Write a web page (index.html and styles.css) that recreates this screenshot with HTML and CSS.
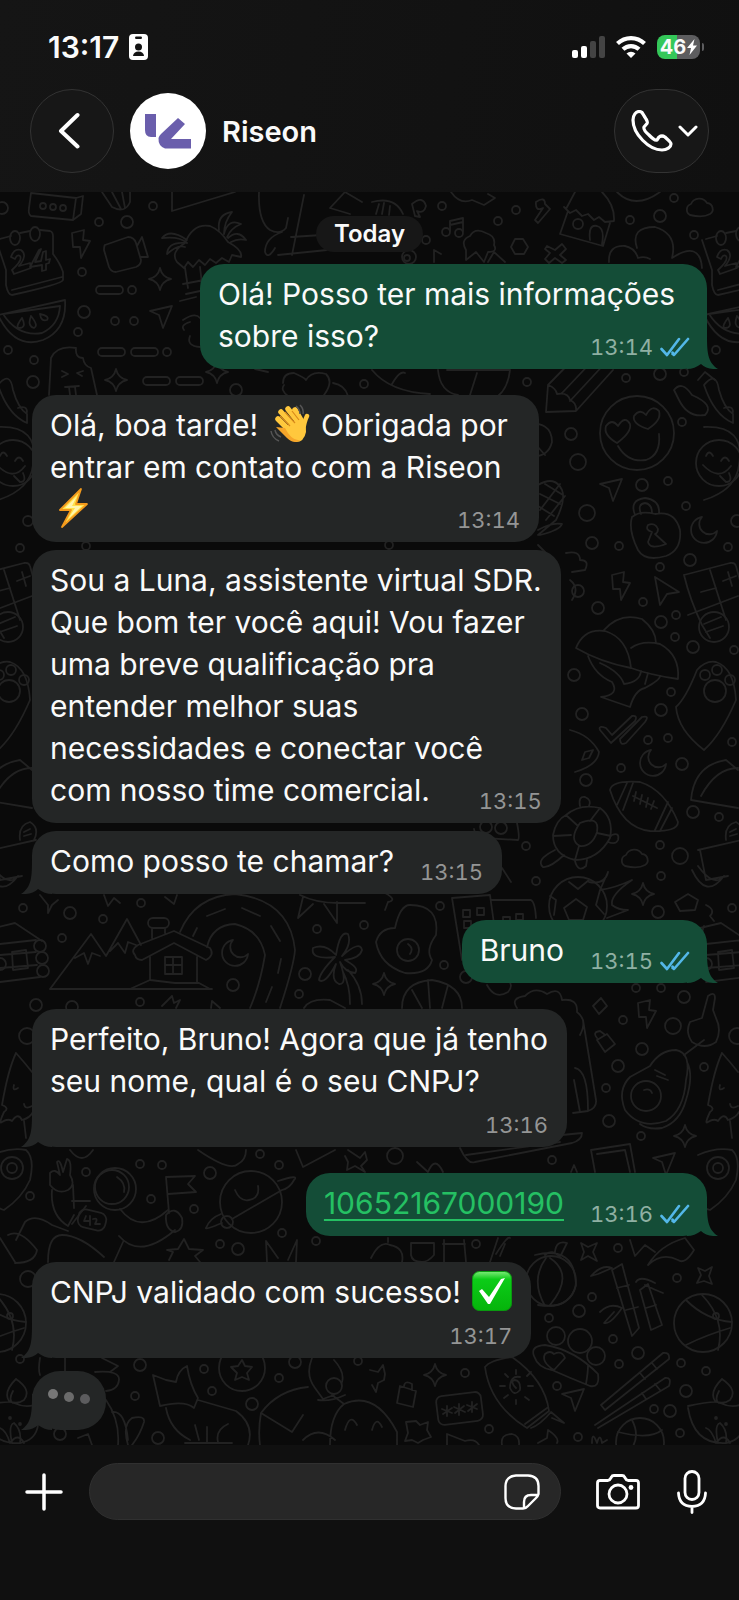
FILE: index.html
```html
<!DOCTYPE html>
<html lang="pt-BR">
<head>
<meta charset="utf-8">
<meta name="viewport" content="width=device-width, initial-scale=1">
<title>Riseon</title>
<link rel="stylesheet" href="styles.css">
</head>
<body>
<svg class="defs" aria-hidden="true">
  <defs>
    <symbol id="tail" viewBox="0 0 31 36"><path d="M20 0C20 18 20 29 31 36C24 36.500 18 35 14 31C10 34 5 36 0 36V0Z"/></symbol>
    <symbol id="read" viewBox="0 0 30 20"><path d="M1.500 12L7 18L19 2M12.500 17L14 18L28 2M12.500 15.500L14 18" fill="none" stroke="#53b7e8" stroke-width="2.600" stroke-linecap="round" stroke-linejoin="round"/></symbol>
    <path id="spark" d="M0-11Q2-2 11 0Q2 2 0 11Q-2 2-11 0Q-2-2 0-11Z"/>
    <path id="plane" d="M-11-6L11-11L2 11L-2-2Z"/>
    <path id="bolt" d="M-9-11L3-14L2-4L9-3L0 14L-1 3L-8 3Z"/>
    <path id="moon" d="M-1-13A13 13 0 1 0 14 1A10 10 0 0 1-1-13Z"/>
    <path id="cloud" d="M-10 7A6 6 0 0 1-9-4A9 9 0 0 1 7-5A6 6 0 0 1 10 6Q3 10-10 7Z"/>
    <g id="calendar"><path d="M0 239L11 236M20 233L30 231M40 230L50 231Q53 232 53 236V254Q60 263 63 272V280Q62 284 12 295Q8 295 6 285V270L-4 240M12 290L62 277"/><ellipse cx="15" cy="238" rx="5" ry="7"/><ellipse cx="35" cy="234" rx="5" ry="7"/><path d="M11 257Q14 248 21 250Q28 255 19 266L30 263L31 268L14 274L12 270Q23 260 20 256Q17 254 15 259ZM39 250L41 249L35 262L41 261L43 252L46 251L46 260L50 259L49 263L46 264L46 270L42 271V265L30 267Z"/></g>
  </defs>
</svg>

<header class="top">
  <div class="status">
    <div class="clock"><span>13:17</span>
      <svg width="19" height="26" viewBox="0 0 19 26" aria-hidden="true"><rect width="19" height="26" rx="4" fill="#fff"/><rect x="6" y="2.500" width="7" height="2.500" rx="1.200" fill="#131313"/><circle cx="9.500" cy="13" r="3.500" fill="#131313"/><path d="M4 22Q4.500 17.500 9.500 17.500T15 22Z" fill="#131313"/></svg>
    </div>
    <div class="signals">
      <svg width="33" height="24" viewBox="0 0 33 24" aria-hidden="true"><rect x="0" y="15" width="6" height="8" rx="2" fill="#fff"/><rect x="9" y="11" width="6" height="12" rx="2" fill="#fff"/><rect x="18" y="6" width="6" height="17" rx="2" fill="#444"/><rect x="27" y="1" width="6" height="22" rx="2" fill="#444"/></svg>
      <svg width="30" height="24" viewBox="0 0 30 24" aria-hidden="true"><g fill="none" stroke="#fff" stroke-width="4.200"><path d="M1.500 8.500A19.500 19.500 0 0 1 28.500 8.500"/><path d="M7 14.300A11.500 11.500 0 0 1 23 14.300"/></g><path d="M10.500 18.500A6.500 6.500 0 0 1 19.500 18.500L15 23Z" fill="#fff"/></svg>
      <div class="battery"><span>46</span><svg width="10" height="16" viewBox="0 0 10 16" aria-hidden="true"><path d="M7.500 0L0 9H4L2.500 16L10 6.500H6Z" fill="#fff"/></svg></div>
    </div>
  </div>
  <div class="bar">
    <button class="glass back" aria-label="Voltar"><svg width="22" height="38" viewBox="0 0 22 38"><path d="M19.500 3L3 19L19.500 34.500" fill="none" stroke="#fff" stroke-width="4" stroke-linecap="round" stroke-linejoin="round"/></svg></button>
    <svg class="avatar" viewBox="0 0 76 76" role="img" aria-label="Foto de Riseon"><circle cx="38" cy="38" r="38" fill="#fff"/><g fill="#6a5eac"><path d="M15 21H26V44H21Q15 44 15 37Z"/><path d="M48 25L55 31L41 46H61V55.500H35Q28 53 28.500 45Q29 43 31 41Z"/></g></svg>
    <h1>Riseon</h1>
    <button class="glass call" aria-label="Ligar">
      <svg width="42" height="42" viewBox="0 0 42 42"><path d="M8 1.500C5 1.500 2 5 2 10C2 24 18 40 31 40C36 40 40 37 40 34C40 32 37 30 34 27Q31 25 28 27L26 30C24 31 21 28 18 25Q12 20 13 17L16 13.500Q17 12 15 9Q12 4 11 2.500Q10 1.500 8 1.500Z" fill="none" stroke="#fff" stroke-width="3.200" stroke-linejoin="round"/></svg>
      <svg width="20" height="12" viewBox="0 0 20 12"><path d="M2 2L10 10L18 2" fill="none" stroke="#fff" stroke-width="3" stroke-linecap="round" stroke-linejoin="round"/></svg>
    </button>
  </div>
</header>

<main class="chat">
  <svg class="doodles" viewBox="0 192 739 1253" preserveAspectRatio="xMidYMin slice" aria-hidden="true">
    <g id="edge">
      <use href="#calendar"/>
      <path d="M-2 315L65 300Q67 330 43 340Q15 350-2 315M3 314L60 306Q59 325 42 333Q18 337 3 314M22 318Q15 327 19 328Q27 328 22 318M31 316Q27 326 34 328Q39 326 31 316M40 314Q41 322 47 320Q50 316 40 314"/>
      <path d="M-2 385Q10 370 13 390Q18 408 27 414V423Q8 415-2 385M18 408Q27 405 27 412"/>
      <path d="M-2 427Q40 425 33 465Q30 490-2 500"/><circle cx="13" cy="463" r="23"/><path d="M-3 465Q13 482 25 466M14 476L20 482Q27 482 23 473M0 456Q3 449 7 456M15 461Q19 454 23 461"/>
      <path d="M-22 575L24 563Q29 562 30 566L45 620M-22 575Q-16 600-4 625L4 638M4 570L20 620M-18 615L32 596M-5 592L10 588M17 581L30 576M22 572L26 586"/><circle cx="8" cy="627" r="15"/><path d="M-2 624L15 617M0 632L17 626"/>
      <path d="M-30 707Q-20 698-9 670Q0 660 10 662Q28 668 30 700Q15 735-2 750Q-28 730-30 707"/><circle cx="9" cy="691" r="11"/><circle cx="-1" cy="675" r="5"/><circle cx="11" cy="670" r="5"/><circle cx="24" cy="680" r="5"/>
      <path d="M-15 800Q-12 765 20 760L32 770M-15 800L32 808M-5 796Q10 768 32 768"/>
      <path d="M-8 850L36 840M0 880L22 876M-6 850L0 880M-14 870Q0 900 18 876Q8 888-8 866M20 840Q18 825 30 822Q40 828 34 840M24 832L30 829M24 836L31 834"/>
      <path d="M-6 928L15 923L42 941M-2 926L-8 945M0 944L36 940M0 955L36 952M0 968L37 965M0 982L40 977M12 952L26 950L28 968L13 970Z"/><circle cx="40" cy="946" r="6"/><circle cx="42" cy="958" r="6"/><circle cx="43" cy="971" r="6"/><circle cx="0" cy="964" r="6"/>
      <path d="M16 1053Q8 1070 2 1105Q10 1108 4 1112Q-2 1125 2 1122Q8 1118 12 1121Q18 1112 22 1120Q30 1118 33 1112M16 1053Q25 1063 32 1072M14 1085Q12 1092 18 1088M24 1104Q25 1110 32 1106M24 1121L26 1138"/>
      <circle cx="12" cy="1168" r="11"/><circle cx="12" cy="1168" r="5"/><path d="M-8 1155Q10 1147 26 1150Q35 1158 30 1180Q22 1198 4 1210Q-4 1208-8 1200"/>
      <circle cx="-3" cy="1323" r="29"/><path d="M-4 1295Q20 1320 12 1350M-20 1300Q0 1320 26 1322M-20 1345Q0 1335 24 1328"/><circle cx="10" cy="1316" r="3"/>
      <path d="M16 1379Q32 1390 24 1400Q17 1405 9 1401Q3 1392 16 1379M13 1391Q8 1400 13 1403M-18 1406Q10 1400 14 1403Q25 1408 34 1405M-18 1408Q-12 1445 20 1443Q36 1440 38 1425M0 1428Q6 1430 10 1443Q18 1432 24 1443M12 1443Q8 1425 14 1423Q22 1430 20 1443"/><circle cx="10" cy="1418" r="1"/><circle cx="20" cy="1424" r="1"/>
    </g>
    <use href="#edge" x="706"/>
    <path d="M31 193L76 198L73 220L31 216Q28 214 29 208ZM76 198L83 196L81 214L73 220"/><circle cx="43" cy="206" r="3"/><circle cx="53" cy="207" r="3"/><circle cx="63" cy="208" r="3"/>
    <path d="M102 192L112 207Q125 214 130 202V192M112 192L121 209M122 192L125 208M172 192V211L235 192"/>
    <path d="M105 245L128 237Q134 237 136 243L141 260Q141 265 136 267L116 272Q111 272 109 267L104 250Q104 246 105 245M137 246L142 237L148 257L140 257"/>
    <path d="M177 262Q170 252 185 243Q193 223 210 226Q220 230 228 242Q243 250 241 257L232 255L229 262L222 258L216 263L210 259L205 265L199 260L193 267L188 262L184 268ZM187 240Q170 228 162 238Q180 236 187 243M184 243Q168 242 167 254Q178 244 185 247M219 230Q217 214 232 212Q224 222 224 234M224 234Q228 218 241 224Q231 228 227 237M228 238Q238 229 246 240Q238 238 231 242M185 268L188 288M200 267L202 284M183 284L204 280M186 294L200 291M180 301L196 297"/>
    <path d="M259 192Q258 222 270 230Q280 235 286 228L288 218M304 195L292 255M282 232Q265 238 265 252Q268 260 275 248M278 255L327 250M291 237L322 235M330 208L345 192L362 202M330 208L350 214"/>
    <path d="M372 202Q395 196 403 214M376 214L379 204M382 214L384 203M389 215L390 206M451 192Q460 205 472 200L484 205L495 198L488 194M412 204Q423 195 426 206Q424 214 417 211L420 217L415 216ZM536 202Q545 196 545 204L550 209L538 223L535 220L543 208Q535 212 536 202"/>
    <path d="M450 231V221L463 218V231M450 225L463 222"/><circle cx="446" cy="232" r="4"/><circle cx="459" cy="233" r="4"/><path d="M434 262V250L441 254"/><circle cx="409" cy="257" r="7"/><circle cx="407" cy="258" r="3"/>
    <path d="M466 250Q460 240 470 236Q475 227 486 233Q496 236 494 245Q498 252 488 252L484 262L476 252L466 260ZM488 262L494 252L505 262M511 247L515 239H523L528 247L524 254H515Z"/>
    <path d="M547 246L555 250L562 244L566 249L560 255L566 260L562 263L555 258L549 263L545 259L550 253L545 249Z"/>
    <path d="M566 209L575 192M602 192Q615 205 614 221L605 222L599 217L594 220L588 214L582 216L576 210L570 213L564 207M568 211L560 234L603 246L610 223M590 240Q588 224 597 226Q605 228 602 244"/><circle cx="578" cy="224" r="5"/>
    <path d="M617 192Q635 210 660 192M609 262Q608 245 625 246Q635 248 638 258Q645 256 650 259M637 248Q630 227 655 227Q678 234 672 258Q700 240 702 268"/><use href="#cloud" x="700" y="208"/>
    <path d="M49 395L51 358Q57 345 76 348Q75 358 83 358Q84 366 91 368L97 395M62 371L68 374L62 377M83 371L77 373L82 376M65 387L79 386M69 387L70 395M75 387L76 395M183 320Q195 312 200 318M184 330Q180 325 190 322M190 336Q186 346 200 347M283 383Q283 373 294 373Q305 378 306 380Q312 370 326 374Q334 382 324 395M284 385Q280 390 288 396M333 383Q345 385 348 396M255 369L268 372"/>
    <path d="M372 370Q390 392 430 394M392 384Q400 370 405 373M438 370Q440 392 458 395M510 370Q508 388 498 396M470 395L477 373M447 370H510M546 412L548 385L592 340M546 412L576 411L613 370M548 385Q556 388 557 394Q568 392 570 400Q577 403 576 411M562 393L598 355M570 401L608 360"/>
    <circle cx="637" cy="433" r="37"/><path d="M617 443Q603 435 606 426Q612 418 618 426Q625 415 630 424Q632 432 617 443M648 429Q632 424 634 416Q640 408 646 415Q652 404 659 411Q662 420 648 429M618 446Q628 463 646 460Q661 455 659 434M674 390Q682 380 692 395Q715 405 705 415Q688 418 679 400ZM698 380L705 372L715 380"/>
    <path d="M538 485Q555 475 562 490Q566 500 556 520L538 535M540 494L560 504M545 484L563 495M538 506L554 516M560 484L540 510M565 496L546 520M540 535Q560 530 562 524Q552 522 538 530M523 424Q552 420 552 442Q548 458 530 456M523 430L545 455"/>
    <path d="M632 517Q640 510 655 514Q675 510 680 530Q682 550 666 556Q645 562 638 550Q628 530 632 517M635 515Q629 500 645 498Q660 500 659 513M641 514Q637 504 645 503Q652 504 652 513M648 542L652 532Q645 530 648 525Q655 522 658 529Q658 533 655 534L666 544Q650 550 648 542"/>
    <path d="M538 545L545 552M566 553Q580 550 580 560Q590 560 585 570L572 572M570 580Q580 588 572 600M570 730Q590 735 599 752Q598 765 575 772M582 760L585 752L593 750L589 758Z"/>
    <path d="M576 648Q584 628 605 631Q628 638 631 668Q600 662 576 648M604 630Q620 612 642 619Q656 630 656 643M631 648Q642 640 660 644Q680 655 678 679Q650 675 631 668M588 656Q595 675 612 682Q620 695 601 697L630 707Q635 690 645 688Q660 680 660 676M600 663Q620 672 624 684Q640 682 641 671M648 673L645 684"/>
    <path d="M600 730Q598 725 606 728L612 735L632 716Q638 715 635 721L611 743ZM620 739L642 717Q650 715 645 722L626 743Q620 746 620 739M610 790Q612 780 640 782Q665 790 678 822Q678 832 650 831Q622 828 610 790M627 783L617 805M633 783L623 810M668 802L655 830M672 808L660 831M633 796L657 808M636 792L634 801M642 795L640 804M648 798L646 807M654 801L651 809"/>
    <path d="M566 815Q580 803 600 808Q614 818 610 838Q598 860 575 860Q553 855 553 835Q556 820 566 815M580 823Q600 815 597 832Q592 847 580 846Q568 840 580 823M566 815L578 826M600 808L590 821M611 836L597 833M575 860L579 846M553 836L571 835M580 806Q578 796 585 797Q592 800 589 806M612 835Q620 832 618 840Q616 845 608 842M555 850Q535 860 543 867Q550 868 564 855M575 861Q578 873 586 866L587 860"/>
    <circle cx="578" cy="906" r="29"/><path d="M564 908L576 899L587 907L583 920H569ZM569 882L578 889L589 880M600 890L596 905L604 914M550 896L556 900L554 915M589 882Q605 885 608 872L600 890Q615 888 632 880Q610 895 612 905Q618 910 628 910L607 918M675 902L688 894L698 900L695 910L680 911ZM706 905Q716 910 710 916L714 921"/>
    <path d="M452 898L490 895L499 960M452 898L462 960M491 900L531 900Q535 902 536 918M463 910H470V917H463ZM477 908H484V915H477ZM464 921H471V928H464ZM503 917H510V922H503ZM516 914H523V920H516ZM474 829Q475 838 484 838L518 840Q520 838 517 823"/><circle cx="486" cy="827" r="6"/><circle cx="501" cy="828" r="6"/><path d="M385 893Q398 900 388 902L385 910M502 868L511 882"/>
    <path d="M410 905Q440 905 436 935Q425 950 432 960Q428 975 405 973Q380 965 376 942Q380 928 395 928Q400 905 410 905"/><circle cx="408" cy="950" r="11"/><path d="M408 944Q414 948 410 954M402 1008Q402 982 432 980Q462 985 462 1008M412 990L422 1008M428 980L430 1008M448 985L442 1008M487 985Q495 1000 508 992Q514 985 508 980"/>
    <path d="M40 895L48 905V913L52 905L58 900M104 895L108 906L114 898L120 903M165 897L174 904L177 895M300 895Q316 903 338 903L365 903M303 897L298 918L313 904M324 904L337 923V902"/>
    <path d="M50 989L91 934L106 956L127 919L141 945M50 989H212M75 958L84 953L88 964L92 953L100 956M110 951L118 943L125 953L128 942L136 945M135 955Q130 950 138 945L174 931L210 948Q215 955 206 960L174 943L142 960Q136 960 135 955M150 957V980M197 957V983M165 957H182V974H165ZM173 957V974M165 965H182M130 989L150 980L175 983L199 983L210 989M152 938V928M165 933V928"/><rect x="148" y="918" width="21" height="10" rx="5"/>
    <path d="M180 932Q195 896 235 894Q290 900 295 950Q294 965 280 1008M207 947Q212 925 235 924Q260 930 265 955Q260 985 250 1008M207 916L225 909M242 908L260 916M271 926L280 941M281 959L278 973M272 987L266 1002M193 936L197 928"/>
    <path d="M335 957Q310 960 313 948Q325 943 336 955Q340 930 348 934Q352 944 342 956Q360 940 362 950Q360 958 345 960Q360 968 355 973Q345 972 340 962Q348 985 339 984Q330 980 336 964Q325 985 319 980Q320 972 335 957M343 972Q350 985 350 1004M348 970Q362 985 362 1004M304 1008Q310 998 330 1000L345 1008M162 1006L168 1000L172 996L174 1003L180 1000L176 1008M211 1008L212 1001L220 1008"/>
    <path d="M517 1008Q510 998 525 996Q535 986 547 994Q560 986 562 1000Q578 998 577 1012Q588 1020 580 1035M583 1020L596 1100Q597 1108 588 1111L573 1113M575 1068Q588 1070 588 1110M574 1080L580 1112M562 1135L582 1133Q582 1140 572 1143L475 1162Q468 1165 460 1148M466 1155L560 1142"/>
    <path d="M593 1006L601 998L607 1006L599 1014ZM597 1040L607 1034L615 1044L605 1052ZM597 1038Q592 1032 600 1031L604 1034M702 1018L708 996Q715 991 715 998L713 1010L716 1018Q722 1030 716 1042Q705 1050 692 1042Q685 1032 690 1022L702 1018ZM704 1040L684 1055"/>
    <path d="M650 1066Q660 1050 676 1050Q692 1053 686 1080Q684 1110 666 1121Q640 1130 625 1110Q617 1090 630 1077ZM687 1062Q694 1075 686 1100Q680 1122 662 1128Q648 1130 640 1124"/><circle cx="646" cy="1096" r="15"/><path d="M655 1070L665 1075M657 1076L668 1080M644 1090Q650 1088 652 1093"/>
    <path d="M591 1150L630 1144L635 1172M591 1150L595 1172M597 1154L625 1150L630 1172M417 1162L428 1172Q435 1155 443 1172M571 1172L574 1165L577 1172M296 1150L303 1167L335 1150M348 1150L360 1158L365 1152L367 1160L361 1166L365 1172L355 1166L347 1170L348 1162L345 1156M70 1150Q82 1166 93 1150M198 1150Q230 1172 238 1164Q246 1160 246 1150"/>
    <path d="M50 1173Q55 1168 60 1175L57 1162Q60 1158 63 1172L67 1159Q72 1160 70 1175Q76 1185 68 1190Q58 1195 50 1185ZM52 1190Q50 1215 68 1226L74 1215M73 1185L74 1208M72 1201L90 1201M72 1224L86 1206M68 1231L52 1225Q35 1213 25 1222L16 1240M8 1235Q20 1228 37 1250Q35 1263 15 1263M0 1238L15 1262M48 1262Q48 1235 62 1235Q80 1235 104 1257M119 1236Q140 1260 175 1230M120 1209Q140 1235 168 1210M114 1262L123 1242"/><circle cx="115" cy="1189" r="21"/><circle cx="112" cy="1187" r="17"/><rect x="78" y="1211" width="28" height="18" rx="7" transform="rotate(14 92 1220)"/><path d="M169 1213L166 1177L195 1176L188 1184L196 1192L168 1194M166 1215Q175 1205 182 1218Q184 1230 175 1232Q165 1230 166 1215M117 1177Q126 1183 124 1192M86 1216L84 1221L89 1221M90 1216V1225M93 1219Q99 1217 95 1224L100 1224"/>
    <circle cx="251" cy="1202" r="31"/><circle cx="227" cy="1222" r="6"/><path d="M222 1223Q205 1230 206 1228Q210 1218 221 1214M232 1219L282 1190M278 1181Q300 1174 294 1180Q290 1188 282 1190M235 1190Q240 1202 249 1200Q260 1198 258 1186M169 1260L173 1252L167 1250L178 1249L184 1239L189 1249L203 1250L195 1256L200 1262M267 1262L266 1241L278 1258M288 1260L297 1240L296 1262"/>
    <path d="M40 1358Q38 1370 40 1375M65 1358V1372M102 1358L118 1366L110 1372M95 1372Q120 1370 119 1380Q118 1390 106 1391M106 1400Q120 1420 118 1445M112 1412Q125 1410 128 1440M128 1445Q122 1425 132 1418Q145 1415 144 1422Q140 1435 132 1445M78 1438L88 1434L92 1445M153 1375L160 1406Q185 1400 194 1408L198 1398Q190 1385 187 1366Q178 1370 176 1382L166 1380ZM166 1408Q170 1430 190 1440M198 1400L236 1411Q255 1425 248 1445M195 1425L199 1440M207 1427V1443M218 1442Q215 1430 228 1424M185 1443L232 1443"/>
    <circle cx="242" cy="1368" r="23"/><path d="M242 1360L245 1366L252 1367L247 1373L249 1380L242 1377L235 1380L237 1373L231 1367L238 1366ZM312 1358Q305 1375 315 1388L323 1399L334 1395M334 1360Q345 1372 342 1382M345 1395Q330 1402 318 1400M308 1387Q278 1390 261 1413L292 1432L303 1415M261 1413Q258 1430 260 1445M332 1395L344 1404Q330 1415 330 1445M344 1404Q375 1390 397 1432V1445M303 1440Q318 1425 335 1440M345 1430Q350 1412 357 1425M372 1430Q376 1415 382 1427"/><circle cx="334" cy="1386" r="8"/>
    <path d="M371 1258Q380 1240 390 1245Q405 1248 402 1262M388 1242V1238M411 1243H434V1255Q428 1262 422 1262Q412 1262 411 1255ZM444 1240V1262M464 1240L466 1262M443 1244H465M490 1262L498 1238M496 1254Q508 1235 510 1238M500 1256L505 1244"/>
    <circle cx="551" cy="1281" r="25"/><path d="M535 1255Q575 1245 576 1285Q570 1310 538 1305M550 1258Q575 1275 550 1305M546 1258Q530 1280 545 1306M545 1255Q552 1248 561 1258M555 1252Q556 1240 567 1243L561 1255M581 1243L588 1247L597 1243L593 1252L597 1261L588 1256L581 1260L584 1252Z"/>
    <path d="M612 1270L622 1264L639 1328L632 1336ZM617 1288L629 1285M626 1310L638 1307M640 1290L648 1284L662 1325L651 1330ZM646 1308L656 1305M591 1276Q602 1264 612 1268L598 1274ZM600 1312Q610 1302 622 1308Q610 1325 604 1323L614 1312M636 1282Q640 1275 655 1283M645 1285Q655 1290 663 1293M698 1268L705 1271L712 1267L709 1276L712 1284L704 1281L697 1283L701 1275ZM648 1265Q660 1245 685 1238L694 1250Q685 1265 678 1260Q662 1252 648 1265M630 1240L635 1256L645 1245L655 1252"/>
    <circle cx="556" cy="1336" r="9"/><circle cx="580" cy="1341" r="12"/><circle cx="596" cy="1356" r="9"/><path d="M534 1356Q530 1346 545 1345Q575 1350 598 1374Q600 1388 590 1386Q570 1378 552 1370Q538 1368 534 1356M554 1370Q541 1362 545 1354Q550 1350 554 1354Q562 1350 565 1358ZM586 1384Q588 1372 588 1366"/>
    <path d="M485 1367Q490 1360 512 1357Q545 1380 549 1411L527 1428Q490 1405 485 1367M525 1424L547 1408M531 1428Q540 1425 551 1412L564 1423L552 1418M516 1388Q510 1382 514 1380Q521 1380 520 1390Q514 1397 510 1388Q510 1375 520 1377M516 1370V1374M505 1374L508 1377M500 1386H505M504 1398L508 1395M516 1400V1404M525 1397L529 1400M528 1386H533M527 1376L531 1372M601 1405L663 1353Q670 1352 669 1359L605 1410ZM595 1425L665 1378Q672 1377 669 1386L598 1428M640 1373L645 1379M652 1363L657 1369M642 1393L646 1399M655 1384L660 1390"/>
    <rect x="437" y="1394" width="45" height="29" rx="6" transform="rotate(-7 459 1408)"/><path d="M447 1406V1416M442 1409L452 1413M452 1408L443 1414M459 1404V1415M454 1407L465 1412M464 1406L455 1413M472 1402V1412M467 1405L477 1409M477 1404L468 1411M400 1386L416 1391L413 1407L397 1403ZM404 1386Q405 1380 412 1384V1390M370 1370L378 1372L383 1365L385 1374L384 1380L378 1383L376 1392L372 1385M406 1422L416 1421L420 1425L428 1422L427 1430L431 1437L423 1440L418 1443L412 1440L405 1441L408 1433ZM447 1445V1434L465 1441Q475 1438 479 1445M502 1445Q500 1434 512 1434Q520 1436 519 1445M538 1443L547 1438L548 1430Q560 1438 557 1443M592 1443Q592 1430 597 1443Q600 1432 602 1443L607 1440"/><circle cx="640" cy="1442" r="24"/><path d="M618 1432Q650 1440 662 1430M632 1420Q640 1435 632 1448"/>
    <use href="#spark" x="160" y="279"/><use href="#spark" x="116" y="380"/><use href="#spark" x="217" y="372"/><use href="#spark" x="643" y="894"/><use href="#spark" x="384" y="984"/><use href="#spark" x="685" y="1136"/><use href="#spark" x="435" y="1375"/>
    <use href="#plane" x="161" y="317"/><use href="#plane" x="611" y="490"/><use href="#plane" x="664" y="1164"/><use href="#plane" x="573" y="1400"/><path d="M655 577L679 592L667 594L660 605Z"/>
    <use href="#bolt" x="81" y="244"/><use href="#bolt" x="621" y="586"/><use href="#bolt" x="647" y="1014"/>
    <use href="#moon" x="703" y="530"/><use href="#moon" x="652" y="763"/><use href="#moon" x="234" y="953"/><use href="#cloud" x="635" y="859"/>
    <rect x="96" y="286" width="27" height="8" rx="4"/><rect x="98" y="348" width="27" height="8" rx="4"/><rect x="131" y="348" width="27" height="8" rx="4"/><rect x="143" y="377" width="27" height="8" rx="4"/><rect x="176" y="377" width="27" height="8" rx="4"/>
    <g class="dots">
      <circle cx="153" cy="206" r="4"/><circle cx="99" cy="222" r="4"/><circle cx="127" cy="222" r="6"/><circle cx="82" cy="272" r="4"/><circle cx="132" cy="290" r="4"/><circle cx="84" cy="312" r="6"/><circle cx="115" cy="321" r="4"/><circle cx="134" cy="321" r="4"/><circle cx="78" cy="332" r="4"/><circle cx="8" cy="350" r="4"/><circle cx="34" cy="360" r="4"/><circle cx="33" cy="382" r="6"/><circle cx="167" cy="352" r="4"/><circle cx="236" cy="390" r="6"/><circle cx="364" cy="384" r="4"/><circle cx="28" cy="521" r="5"/><circle cx="86" cy="546" r="4"/><circle cx="20" cy="548" r="4"/><circle cx="2" cy="208" r="6"/>
      <circle cx="442" cy="206" r="4"/><circle cx="516" cy="210" r="4"/><circle cx="498" cy="221" r="4"/><circle cx="426" cy="240" r="4"/><circle cx="630" cy="220" r="4"/><circle cx="660" cy="216" r="6"/><circle cx="694" cy="235" r="4"/><circle cx="674" cy="198" r="4"/><circle cx="527" cy="382" r="4"/><circle cx="571" cy="434" r="6"/><circle cx="578" cy="462" r="8"/><circle cx="626" cy="378" r="4"/><circle cx="660" cy="374" r="6"/><circle cx="684" cy="372" r="4"/><circle cx="682" cy="422" r="4"/><circle cx="716" cy="350" r="4"/><circle cx="642" cy="485" r="6"/><circle cx="668" cy="481" r="4"/><circle cx="587" cy="513" r="8"/><circle cx="686" cy="506" r="4"/><circle cx="592" cy="543" r="6"/><circle cx="619" cy="546" r="4"/><circle cx="737" cy="521" r="6"/><circle cx="728" cy="547" r="4"/><circle cx="389" cy="545" r="4"/>
      <circle cx="690" cy="560" r="6"/><circle cx="660" cy="567" r="4"/><circle cx="578" cy="591" r="6"/><circle cx="598" cy="608" r="6"/><circle cx="643" cy="602" r="4"/><circle cx="661" cy="622" r="6"/><circle cx="676" cy="615" r="4"/><circle cx="675" cy="637" r="4"/><circle cx="693" cy="647" r="6"/><circle cx="734" cy="650" r="4"/><circle cx="574" cy="675" r="6"/><circle cx="582" cy="714" r="6"/><circle cx="671" cy="692" r="4"/><circle cx="661" cy="710" r="6"/><circle cx="648" cy="740" r="4"/><circle cx="668" cy="738" r="4"/><circle cx="732" cy="742" r="4"/><circle cx="682" cy="764" r="6"/><circle cx="621" cy="768" r="4"/><circle cx="586" cy="780" r="6"/><circle cx="693" cy="812" r="6"/><circle cx="719" cy="817" r="4"/><circle cx="526" cy="846" r="4"/><circle cx="660" cy="845" r="4"/><circle cx="680" cy="856" r="8"/><circle cx="661" cy="876" r="4"/><circle cx="536" cy="881" r="4"/><circle cx="440" cy="906" r="4"/><circle cx="658" cy="912" r="6"/><circle cx="732" cy="908" r="4"/>
      <circle cx="23" cy="908" r="4"/><circle cx="70" cy="913" r="6"/><circle cx="141" cy="903" r="4"/><circle cx="103" cy="919" r="4"/><circle cx="62" cy="938" r="4"/><circle cx="36" cy="1005" r="6"/><circle cx="72" cy="1007" r="6"/><circle cx="140" cy="1002" r="4"/><circle cx="233" cy="985" r="6"/><circle cx="299" cy="994" r="4"/><circle cx="305" cy="974" r="6"/><circle cx="317" cy="929" r="4"/><circle cx="364" cy="925" r="4"/><circle cx="27" cy="1036" r="8"/><circle cx="444" cy="965" r="4"/><circle cx="466" cy="977" r="6"/><circle cx="636" cy="988" r="4"/><circle cx="661" cy="988" r="4"/><circle cx="684" cy="997" r="6"/><circle cx="623" cy="1020" r="4"/><circle cx="673" cy="1026" r="8"/><circle cx="642" cy="1049" r="6"/><circle cx="618" cy="1066" r="6"/><circle cx="606" cy="1088" r="4"/><circle cx="704" cy="1067" r="4"/><circle cx="609" cy="1121" r="6"/><circle cx="641" cy="1136" r="4"/><circle cx="395" cy="1156" r="8"/><circle cx="552" cy="1160" r="4"/><circle cx="737" cy="1036" r="8"/>
      <circle cx="140" cy="1164" r="4"/><circle cx="162" cy="1165" r="4"/><circle cx="86" cy="1172" r="4"/><circle cx="210" cy="1173" r="6"/><circle cx="260" cy="1154" r="4"/><circle cx="279" cy="1165" r="4"/><circle cx="30" cy="1196" r="4"/><circle cx="151" cy="1199" r="4"/><circle cx="194" cy="1209" r="4"/><circle cx="282" cy="1233" r="4"/><circle cx="220" cy="1244" r="4"/><circle cx="238" cy="1249" r="6"/><circle cx="316" cy="1241" r="4"/><circle cx="140" cy="1365" r="6"/><circle cx="204" cy="1369" r="4"/><circle cx="212" cy="1391" r="4"/><circle cx="135" cy="1396" r="4"/><circle cx="252" cy="1404" r="6"/><circle cx="158" cy="1438" r="6"/><circle cx="279" cy="1378" r="4"/><circle cx="295" cy="1362" r="6"/><circle cx="358" cy="1361" r="4"/><circle cx="60" cy="1434" r="6"/><circle cx="28" cy="1279" r="8"/><circle cx="20" cy="1359" r="4"/>
      <circle cx="476" cy="1244" r="4"/><circle cx="618" cy="1248" r="4"/><circle cx="677" cy="1278" r="4"/><circle cx="592" cy="1297" r="4"/><circle cx="579" cy="1311" r="6"/><circle cx="549" cy="1318" r="4"/><circle cx="613" cy="1339" r="4"/><circle cx="638" cy="1353" r="6"/><circle cx="619" cy="1364" r="4"/><circle cx="681" cy="1363" r="4"/><circle cx="706" cy="1371" r="4"/><circle cx="465" cy="1373" r="4"/><circle cx="557" cy="1386" r="4"/><circle cx="686" cy="1391" r="6"/><circle cx="654" cy="1409" r="4"/><circle cx="670" cy="1411" r="6"/><circle cx="680" cy="1433" r="4"/><circle cx="489" cy="1429" r="4"/><circle cx="578" cy="1437" r="4"/>
    </g>
  </svg>

  <div class="day">Today</div>

  <article class="msg sent wide">Olá! Posso ter mais informações<br>sobre isso?<span class="meta">13:14<svg class="ticks"><use href="#read"/></svg></span><svg class="tail"><use href="#tail"/></svg></article>

  <article class="msg turn wide">Olá, boa tarde!
    <svg class="emoji" viewBox="0 0 40 40" role="img" aria-label="👋"><g stroke="#ffc83d" stroke-width="5.500" stroke-linecap="round" fill="none"><path d="M8 15L19 26M11 8L24 22M18 5L29 19M25 6L32 18"/><path d="M33 27Q34 18 37 12" stroke-width="4.500"/></g><path d="M13 24L31 13Q36 19 36 28Q34 38 26 38Q18 36 13 24Z" fill="#ffc83d"/><path d="M15 24Q22 38 31 36Q24 41 17 34L6 23Z" fill="#f5a52a"/><path d="M10 12L20 22M15 8L25 19M22 7L29 16" stroke="#d98a1a" stroke-width="1.200" fill="none"/><path d="M26 2Q30 5 30 10M30 1Q34 5 33 10M5 26Q6 31 11 33M1 27Q2 34 9 37" stroke="#555" stroke-width="1.500" fill="none"/></svg>
    Obrigada por<br>entrar em contato com a Riseon<br><svg class="emoji" viewBox="0 0 40 40" role="img" aria-label="⚡"><path d="M28 1L7 22H18L9 39L34 16H23Z" fill="#ffe14a" stroke="#f39a1c" stroke-width="1.800" stroke-linejoin="round"/><path d="M24 8L12 20H22L15 31L29 18H19Z" fill="#fff6b0"/></svg><span class="meta">13:14</span></article>

  <article class="msg">Sou a Luna, assistente virtual SDR.<br>Que bom ter você aqui! Vou fazer<br>uma breve qualificação pra<br>entender melhor suas<br>necessidades e conectar você<br>com nosso time comercial.<span class="meta">13:15</span></article>

  <article class="msg">Como posso te chamar?<span class="meta">13:15</span><svg class="tail"><use href="#tail"/></svg></article>

  <article class="msg sent turn">Bruno<span class="meta">13:15<svg class="ticks"><use href="#read"/></svg></span><svg class="tail"><use href="#tail"/></svg></article>

  <article class="msg turn">Perfeito, Bruno! Agora que já tenho<br>seu nome, qual é o seu CNPJ?<span class="meta below">13:16</span><svg class="tail"><use href="#tail"/></svg></article>

  <article class="msg sent turn"><a href="tel:10652167000190">10652167000190</a><span class="meta">13:16<svg class="ticks"><use href="#read"/></svg></span><svg class="tail"><use href="#tail"/></svg></article>

  <article class="msg turn">CNPJ validado com sucesso!
    <svg class="emoji last" viewBox="0 0 40 40" role="img" aria-label="✅"><defs><linearGradient id="green" x2="0" y2="1"><stop stop-color="#7dea78"/><stop offset=".2" stop-color="#0ccc18"/><stop offset="1" stop-color="#05b40b"/></linearGradient></defs><rect x=".5" y=".5" width="39" height="39" rx="7" fill="url(#green)" stroke="#0a9a10"/><path d="M7 20L10 18L17 26L29 8L33 7L18 33H16Z" fill="#fff"/></svg><span class="meta below">13:17</span><svg class="tail"><use href="#tail"/></svg></article>

  <div class="msg typing" role="status" aria-label="Digitando"><svg width="42" height="16" viewBox="0 0 42 16"><circle cx="5" cy="5" r="5" fill="#777"/><circle cx="21" cy="8" r="5" fill="#6b6b6b"/><circle cx="37" cy="10" r="5" fill="#5c5c5e"/></svg><svg class="tail"><use href="#tail"/></svg></div>
</main>

<footer class="composer">
  <button aria-label="Anexar"><svg width="38" height="38" viewBox="0 0 38 38"><path d="M19 2V36M2 19H36" stroke="#fff" stroke-width="3.500" stroke-linecap="round"/></svg></button>
  <div class="field">
    <input type="text" aria-label="Mensagem">
    <button aria-label="Figurinhas"><svg width="36" height="36" viewBox="0 0 36 36"><path d="M12 1.500H24Q34.500 2 34.500 12V20Q34 22 32 24L24 32Q22 34.500 19 34.500H12Q1.500 34 1.500 24V12Q2 2 12 1.500ZM20 34V28Q20 21 27 21H34.500" fill="none" stroke="#fff" stroke-width="2.400" stroke-linejoin="round"/></svg></button>
  </div>
  <button class="camera" aria-label="Câmera"><svg width="44" height="36" viewBox="0 0 44 36"><g fill="none" stroke="#fff" stroke-width="2.800" stroke-linejoin="round"><path d="M4 6.500H12Q14 6 15.500 3Q16 1.500 18 1.500H26Q28 1.500 28.500 3Q30 6 32 6.500H40Q42.500 6.500 42.500 9V31.500Q42.500 34 40 34H4Q1.500 34 1.500 31.500V9Q1.500 6.500 4 6.500Z"/><circle cx="22" cy="20" r="9"/></g><circle cx="35" cy="13.500" r="2.400" fill="#fff"/></svg></button>
  <button class="mic" aria-label="Gravar áudio"><svg width="30" height="44" viewBox="0 0 30 44"><g fill="none" stroke="#fff" stroke-width="2.800" stroke-linecap="round"><rect x="8" y="1.500" width="14" height="28" rx="7"/><path d="M1.500 23Q2 36 15 36.500Q28 36 28.500 23M15 37V42.500"/></g></svg></button>
</footer>
</body>
</html>
```
FILE: styles.css
```css
* { box-sizing: border-box; }

body {
  margin: 0;
  min-height: 100vh;
  display: flex;
  flex-direction: column;
  background: #101010;
  color: #fafafa;
  font-family: Inter, "Liberation Sans", sans-serif;
}

button {
  display: flex;
  align-items: center;
  justify-content: center;
  padding: 0;
  border: 0;
  background: none;
  color: inherit;
}

svg { display: block; flex: none; }
.defs { position: absolute; width: 0; height: 0; }

.top {
  padding: 31px 30px 19px;
  background: linear-gradient(100deg, #151515, #101010);
}

.status {
  display: flex;
  justify-content: space-between;
  align-items: center;
  height: 32px;
  margin-bottom: 26px;
  padding: 0 5px 0 18px;
}

.clock {
  display: flex;
  align-items: center;
  gap: 10px;
  font-size: 30px;
  font-weight: 600;
}

.signals { display: flex; align-items: center; gap: 11px; }

.battery {
  position: relative;
  display: flex;
  align-items: center;
  justify-content: center;
  gap: 1px;
  width: 43px;
  height: 24px;
  margin-right: 4px;
  border-radius: 8px;
  background: linear-gradient(90deg, #34c759 46%, #5d5d5f 46%);
  font-size: 20px;
  font-weight: 700;
  line-height: 24px;
}

.battery::after {
  content: "";
  position: absolute;
  left: 45px;
  width: 2px;
  height: 8px;
  border-radius: 0 2px 2px 0;
  background: #5d5d5f;
}

.bar { display: flex; align-items: center; }

.glass {
  height: 84px;
  border: 1px solid #333;
  border-radius: 42px;
  background: #171717;
}

.back { width: 84px; padding-right: 7px; }
.call { width: 95px; gap: 5px; padding-left: 5px; }
.avatar { width: 76px; height: 76px; margin: 0 16px; }

h1 {
  flex: 1;
  margin: 0;
  font-size: 29px;
  font-weight: 600;
}

.chat {
  position: relative;
  flex: 1;
  display: flex;
  flex-direction: column;
  align-items: flex-start;
  gap: 8px;
  padding: 24px 32px 15px;
  overflow: hidden;
  background: #0a0a0a;
}

.doodles {
  position: absolute;
  inset: 0;
  width: 100%;
  height: 100%;
  fill: none;
  stroke: #222;
  stroke-width: 1.8;
  stroke-linejoin: round;
  stroke-linecap: round;
}

.day {
  position: relative;
  align-self: center;
  margin-bottom: 4px;
  padding: 0 18px;
  border-radius: 18px;
  background: #171717;
  font-size: 24px;
  font-weight: 600;
  line-height: 36px;
}

.msg {
  position: relative;
  isolation: isolate;
  display: flow-root;
  padding: 9px 19px 10px 18px;
  border-radius: 24px;
  background: #242626;
  font-size: 30px;
  line-height: 42px;
}

.sent { align-self: flex-end; padding-right: 17px; background: #144d37; }
.turn { margin-top: 18px; }
.wide { min-width: 507px; }
.msg a { color: #25c063; text-decoration-thickness: 2px; text-underline-offset: 5px; }

.meta {
  float: right;
  display: flex;
  align-items: center;
  gap: 7px;
  margin-left: 26px;
  padding-top: 20px;
  color: #949595;
  font-size: 22px;
  font-variant-numeric: tabular-nums;
  line-height: 24px;
}

.sent .meta { color: #8fb0a3; }
.below { float: none; justify-content: flex-end; padding-top: 11px; }
.ticks { width: 30px; height: 20px; }

.emoji {
  display: inline-block;
  width: 40px;
  height: 40px;
  margin: -4px 3px;
  vertical-align: -4px;
}

.last { margin-right: 0; }

.tail {
  position: absolute;
  z-index: -1;
  bottom: 0;
  left: -11px;
  width: 31px;
  height: 36px;
  fill: #242626;
  transform: scaleX(-1);
}

.sent .tail { left: auto; right: -11px; fill: #144d37; transform: none; }

.typing { margin-top: 5px; padding: 18px 16px 25px; border-radius: 28px; }

.composer {
  display: flex;
  align-items: center;
  padding: 18px 32px 80px 25px;
}

.field {
  flex: 1;
  display: flex;
  align-items: center;
  min-width: 0;
  height: 57px;
  margin: 0 35px 0 26px;
  padding: 0 20px;
  border: 1px solid #303030;
  border-radius: 29px;
  background: #272727;
}

.field input {
  flex: 1;
  min-width: 0;
  border: 0;
  outline: 0;
  background: none;
  color: inherit;
  font: inherit;
  font-size: 30px;
}

.mic { margin-left: 37px; }
```
